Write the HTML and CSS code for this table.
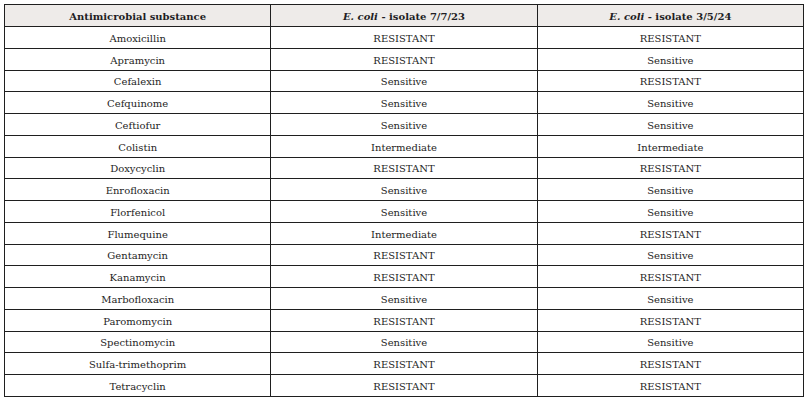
FILE: index.html
```html
<!DOCTYPE html>
<html>
<head>
<meta charset="utf-8">
<link rel="stylesheet" href="styles.css">
</head>
<body>
<table class="results">
  <thead>
    <tr>
      <th>Antimicrobial substance</th>
      <th><i>E. coli</i> - isolate 7/7/23</th>
      <th><i>E. coli</i> - isolate 3/5/24</th>
    </tr>
  </thead>
  <tbody>
    <tr><td>Amoxicillin</td><td>RESISTANT</td><td>RESISTANT</td></tr>
    <tr><td>Apramycin</td><td>RESISTANT</td><td>Sensitive</td></tr>
    <tr><td>Cefalexin</td><td>Sensitive</td><td>RESISTANT</td></tr>
    <tr><td>Cefquinome</td><td>Sensitive</td><td>Sensitive</td></tr>
    <tr><td>Ceftiofur</td><td>Sensitive</td><td>Sensitive</td></tr>
    <tr><td>Colistin</td><td>Intermediate</td><td>Intermediate</td></tr>
    <tr><td>Doxycyclin</td><td>RESISTANT</td><td>RESISTANT</td></tr>
    <tr><td>Enrofloxacin</td><td>Sensitive</td><td>Sensitive</td></tr>
    <tr><td>Florfenicol</td><td>Sensitive</td><td>Sensitive</td></tr>
    <tr><td>Flumequine</td><td>Intermediate</td><td>RESISTANT</td></tr>
    <tr><td>Gentamycin</td><td>RESISTANT</td><td>Sensitive</td></tr>
    <tr><td>Kanamycin</td><td>RESISTANT</td><td>RESISTANT</td></tr>
    <tr><td>Marbofloxacin</td><td>Sensitive</td><td>Sensitive</td></tr>
    <tr><td>Paromomycin</td><td>RESISTANT</td><td>RESISTANT</td></tr>
    <tr><td>Spectinomycin</td><td>Sensitive</td><td>Sensitive</td></tr>
    <tr><td>Sulfa-trimethoprim</td><td>RESISTANT</td><td>RESISTANT</td></tr>
    <tr><td>Tetracyclin</td><td>RESISTANT</td><td>RESISTANT</td></tr>
  </tbody>
</table>
</body>
</html>
```
FILE: styles.css
```css
html, body {
  margin: 0;
  padding: 0;
  background: #ffffff;
}
body {
  padding: 4px 0 0 4px;
  font-family: "DejaVu Serif", serif;
  color: #1e1e24;
}
.results {
  border-collapse: collapse;
  width: 800px;
  table-layout: fixed;
  font-size: 10px;
}
.results th,
.results td {
  border: 1px solid #1f1f1f;
  text-align: center;
  padding: 3px 0 0 0;
  height: 17.75px;
  line-height: 14px;
}
.results th {
  background: #eeebe9;
  font-weight: bold;
  padding-top: 2px;
  height: 19px;
}
.results th i {
  font-weight: bold;
}
```
